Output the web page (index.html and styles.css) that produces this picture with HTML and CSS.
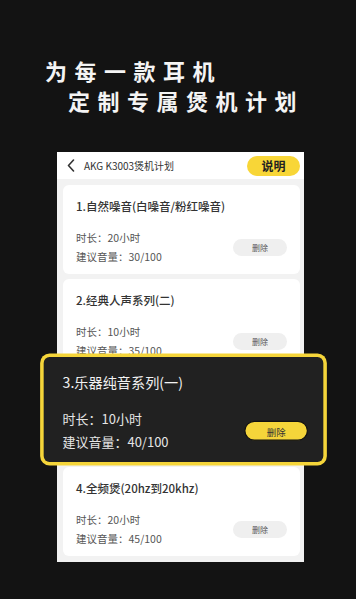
FILE: index.html
```html
<!DOCTYPE html>
<html lang="zh-CN">

<head>
    <meta charset="UTF-8">
    <title>煲机计划</title>

    <link rel="stylesheet" href="styles.css">
</head>

<body>

    <div class="slogan">
        <div class="slogan-line">为每一款耳机</div>
        <div class="slogan-line second">定制专属煲机计划</div>
    </div>

    <div class="screen">
        <div class="screen-header">
            <svg class="back" width="8" height="13" viewBox="0 0 8 13">
                <path d="M6.5 1 L1.5 6.5 L6.5 12" fill="none" stroke="#333" stroke-width="1.6" stroke-linecap="round" stroke-linejoin="round"/>
            </svg>
            <span class="screen-title">AKG K3003煲机计划</span>
            <span class="help-btn">说明</span>
        </div>

        <div class="plan-list">
            <div class="plan">
                <div class="plan-title">1.自然噪音(白噪音/粉红噪音)</div>
                <div class="plan-body">
                    <div class="plan-info">
                        <div>时长：20小时</div>
                        <div>建议音量：30/100</div>
                    </div>
                    <span class="del-btn">删除</span>
                </div>
            </div>

            <div class="plan">
                <div class="plan-title">2.经典人声系列(二)</div>
                <div class="plan-body">
                    <div class="plan-info">
                        <div>时长：10小时</div>
                        <div>建议音量：35/100</div>
                    </div>
                    <span class="del-btn">删除</span>
                </div>
            </div>

            <!-- выделенная карточка, увеличена поверх соседних -->
            <div class="plan active">
                <div class="plan-title">3.乐器纯音系列(一)</div>
                <div class="plan-body">
                    <div class="plan-info">
                        <div>时长：10小时</div>
                        <div>建议音量：40/100</div>
                    </div>
                    <span class="del-btn">删除</span>
                </div>
            </div>

            <div class="plan">
                <div class="plan-title">4.全频煲(20hz到20khz)</div>
                <div class="plan-body">
                    <div class="plan-info">
                        <div>时长：20小时</div>
                        <div>建议音量：45/100</div>
                    </div>
                    <span class="del-btn">删除</span>
                </div>
            </div>
        </div>
    </div>

</body>

</html>
```

FILE: styles.css
```css
body {
    margin: 0;
    background-color: #131313;
    font-family: "Noto Sans CJK SC", "Noto Sans", sans-serif;
    height: 599px;
    overflow: hidden;
}

/* Big headline */
.slogan {
    padding-top: 55px;
    color: #f4f4f4;
    font-size: 22px;
    font-weight: bold;
    letter-spacing: 7.5px;
    line-height: 30px;
}

.slogan-line {
    padding-left: 45px;
}

.slogan-line.second {
    padding-left: 68px;
}

/* Phone screen */
.screen {
    margin: 37px 0 0 57px;
    width: 247px;
    height: 410px;
    background-color: #f2f2f2;
    position: relative;
}

.screen-header {
    height: 27px;
    background-color: #fff;
    display: flex;
    align-items: center;
    padding: 0 4px 0 10px;
}

.back {
    margin-right: 9px;
}

.screen-title {
    font-size: 10px;
    color: #333;
    flex: 1;
}

.help-btn {
    background-color: #f8d637;
    color: #222;
    font-size: 12px;
    font-weight: bold;
    width: 53px;
    height: 20px;
    line-height: 20px;
    text-align: center;
    border-radius: 10px;
}

.plan-list {
    padding: 6px 4px 0 6px;
    display: flex;
    flex-direction: column;
    gap: 5px;
}

/* The plan card */
.plan {
    background-color: #fff;
    border-radius: 6px;
    height: 89px;
    box-sizing: border-box;
    padding: 14px 13px 0 13px;
}

.plan-title {
    font-size: 11.5px;
    line-height: 14px;
    font-weight: 500;
    color: #333;
}

.plan-body {
    margin-top: 15px;
    display: flex;
    align-items: center;
    justify-content: space-between;
}

.plan-info {
    font-size: 10.5px;
    line-height: 19px;
    color: #555;
}

.del-btn {
    width: 54px;
    height: 17px;
    line-height: 17px;
    text-align: center;
    font-size: 8px;
    color: #555;
    background-color: #efefef;
    border-radius: 9px;
    margin-top: 1px;
}

/* Highlighted card */
.plan.active {
    background-color: #212121;
    transform: translate(2px, -8px) scale(1.18);
    box-shadow: 0 0 0 3px #f5d53a;
    border-radius: 5px;
    padding-left: 16px;
    position: relative;
    z-index: 1;
}

.plan.active .plan-title {
    color: #f2f2f2;
    font-size: 12px;
    font-weight: normal;
}

.plan.active .plan-info {
    color: #e6e6e6;
    font-size: 11px;
}

.plan.active .del-btn {
    background-color: #f5d53a;
    color: #333;
    border: 1px solid #111;
    box-sizing: border-box;
}
```
